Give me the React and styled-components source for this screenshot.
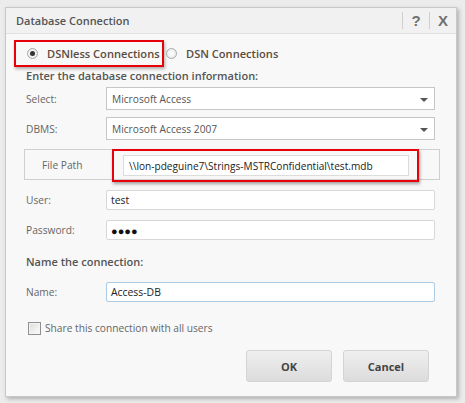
import React from "react";
import styled, { createGlobalStyle } from "styled-components";

const GlobalStyle = createGlobalStyle`
  html, body {
    margin: 0;
    padding: 0;
    background: #ececec;
    font-family: "Open Sans", "Noto Sans", sans-serif;
  }
`;

const Page = styled.div`
  width: 465px;
  height: 403px;
  padding: 7px 0 0 5px;
  box-sizing: border-box;
`;

const Dialog = styled.div`
  width: 452px;
  height: 390px;
  box-sizing: border-box;
  background: #f8f8f8;
  border: 1px solid #c8c8c8;
  box-shadow: 2px 2px 4px rgba(0, 0, 0, 0.25);
  display: flex;
  flex-direction: column;
`;

const TitleBar = styled.div`
  height: 25px;
  flex: none;
  display: flex;
  align-items: center;
  background: #f1f1f1;
  border-bottom: 1px solid #e2e2e2;
  padding-left: 10px;
`;

const Title = styled.div`
  flex: 1;
  font-size: 11px;
  font-weight: 600;
  color: #555;
`;

const TitleButton = styled.div`
  width: 26px;
  height: 17px;
  display: flex;
  align-items: center;
  justify-content: center;
  border-left: 1px solid #cfcfcf;
  font-family: "Liberation Sans", Arial, sans-serif;
  font-weight: bold;
  font-size: 15px;
  color: #707070;
`;

const Body = styled.div`
  flex: 1;
  display: flex;
  flex-direction: column;
  padding: 6px 20px 0 20px;
`;

const RadioRow = styled.div`
  display: flex;
  align-items: center;
  height: 27px;
  margin-left: -12px;
`;

const Highlight = styled.div`
  display: flex;
  align-items: center;
  gap: 9px;
  width: 150px;
  height: 27px;
  box-sizing: border-box;
  border: 2px solid #e8000a;
  padding: 0 0 0 11px;
  box-shadow: 1px 2px 3px rgba(0, 0, 0, 0.3);
`;

const RadioOption = styled.div`
  display: flex;
  align-items: center;
  gap: 9px;
  margin-left: 2px;
`;

const RadioDot = styled.span`
  width: 11px;
  height: 11px;
  border-radius: 50%;
  box-sizing: border-box;
  border: 1px solid #a8a8a8;
  background: radial-gradient(circle, #fff 0%, #e4e4e4 100%);
  display: flex;
  align-items: center;
  justify-content: center;
  &::after {
    content: "";
    width: 5px;
    height: 5px;
    border-radius: 50%;
    background: ${(p) => (p.checked ? "#333" : "transparent")};
  }
`;

const RadioLabel = styled.span`
  font-size: 11.1px;
  font-weight: 600;
  color: #5b4c3c;
`;

const Heading = styled.div`
  font-size: 11px;
  font-weight: 600;
  color: #555;
  margin-top: ${(p) => p.top || 0}px;
  height: 17px;
  line-height: 17px;
`;

const FieldRow = styled.div`
  display: flex;
  align-items: center;
  margin-top: ${(p) => p.top || 0}px;
`;

const Label = styled.div`
  width: 80px;
  font-size: 10.2px;
  color: #666;
`;

const SelectBox = styled.div`
  width: 329px;
  height: 23px;
  box-sizing: border-box;
  border: 1px solid #c6c6c6;
  background: #fff;
  display: flex;
  align-items: center;
  padding: 0 6px 0 5px;
  font-size: 10.2px;
  color: #555;
  justify-content: space-between;
`;

const Arrow = styled.span`
  width: 0;
  height: 0;
  border-left: 4px solid transparent;
  border-right: 4px solid transparent;
  border-top: 4px solid #555;
  margin-top: 2px;
`;

const TextInput = styled.div`
  width: 329px;
  height: 20px;
  box-sizing: border-box;
  border: 1px solid ${(p) => (p.focused ? "#a9cbe6" : "#d8d8d8")};
  border-radius: 2px;
  background: #fff;
  display: flex;
  align-items: center;
  padding-left: 4px;
  font-size: 10.4px;
  color: #222;
`;

const PathPanel = styled.div`
  margin: 9px -4px 0 -2px;
  height: 31px;
  box-sizing: border-box;
  border: 1px solid #cfcfcf;
  display: flex;
  align-items: center;
  padding-left: 17px;
`;

const PathLabel = styled.div`
  width: 70px;
  font-size: 10.2px;
  color: #666;
`;

const PathHighlight = styled.div`
  height: 33px;
  width: 307px;
  box-sizing: border-box;
  border: 2px solid #e8000a;
  box-shadow: 1px 2px 3px rgba(0, 0, 0, 0.35);
  display: flex;
  align-items: center;
  padding-left: 9px;
  margin-top: 2px;
`;

const PathInput = styled.div`
  width: 286px;
  height: 21px;
  box-sizing: border-box;
  border: 1px solid #dcdcdc;
  background: #fff;
  display: flex;
  align-items: center;
  padding-left: 5px;
  font-size: 10.1px;
  color: #222;
  white-space: nowrap;
`;

const Dots = styled.span`
  font-size: 11px;
  color: #111;
`;

const CheckRow = styled.label`
  display: flex;
  align-items: center;
  gap: 4px;
  margin-top: 19px;
  margin-left: 2px;
  font-size: 10.2px;
  color: #666;
`;

const CheckBox = styled.span`
  width: 13px;
  height: 13px;
  box-sizing: border-box;
  border: 1px solid #8f8f8f;
  background: linear-gradient(135deg, #dcdcdc, #fdfdfd);
  box-shadow: inset 0 0 0 1px #f4f4f4;
`;

const Footer = styled.div`
  display: flex;
  justify-content: flex-end;
  gap: 11px;
  margin-top: 15px;
  padding-right: 7px;
`;

const Button = styled.div`
  width: 86px;
  height: 32px;
  box-sizing: border-box;
  border: 1px solid #d4d4d4;
  border-radius: 3px;
  background: linear-gradient(#efefef, #dcdcdc);
  display: flex;
  align-items: center;
  justify-content: center;
  font-size: 11px;
  font-weight: 700;
  color: #444;
`;

export default function App() {
  return (
    <Page>
      <GlobalStyle />
      <Dialog>
        <TitleBar>
          <Title>Database Connection</Title>
          <TitleButton>?</TitleButton>
          <TitleButton>X</TitleButton>
        </TitleBar>
        <Body>
          <RadioRow>
            <Highlight>
              <RadioDot checked />
              <RadioLabel>DSNless Connections</RadioLabel>
            </Highlight>
            <RadioOption>
              <RadioDot />
              <RadioLabel>DSN Connections</RadioLabel>
            </RadioOption>
          </RadioRow>
          <Heading>Enter the database connection information:</Heading>
          <FieldRow top={3}>
            <Label>Select:</Label>
            <SelectBox>
              Microsoft Access
              <Arrow />
            </SelectBox>
          </FieldRow>
          <FieldRow top={7}>
            <Label>DBMS:</Label>
            <SelectBox>
              Microsoft Access 2007
              <Arrow />
            </SelectBox>
          </FieldRow>
          <PathPanel>
            <PathLabel>File Path</PathLabel>
            <PathHighlight>
              <PathInput>\\lon-pdeguine7\Strings-MSTRConfidential\test.mdb</PathInput>
            </PathHighlight>
          </PathPanel>
          <FieldRow top={10}>
            <Label>User:</Label>
            <TextInput>test</TextInput>
          </FieldRow>
          <FieldRow top={10}>
            <Label>Password:</Label>
            <TextInput>
              <Dots>●●●●</Dots>
            </TextInput>
          </FieldRow>
          <Heading top={13}>Name the connection:</Heading>
          <FieldRow top={12}>
            <Label>Name:</Label>
            <TextInput focused>Access-DB</TextInput>
          </FieldRow>
          <CheckRow>
            <CheckBox />
            Share this connection with all users
          </CheckRow>
          <Footer>
            <Button>OK</Button>
            <Button>Cancel</Button>
          </Footer>
        </Body>
      </Dialog>
    </Page>
  );
}
